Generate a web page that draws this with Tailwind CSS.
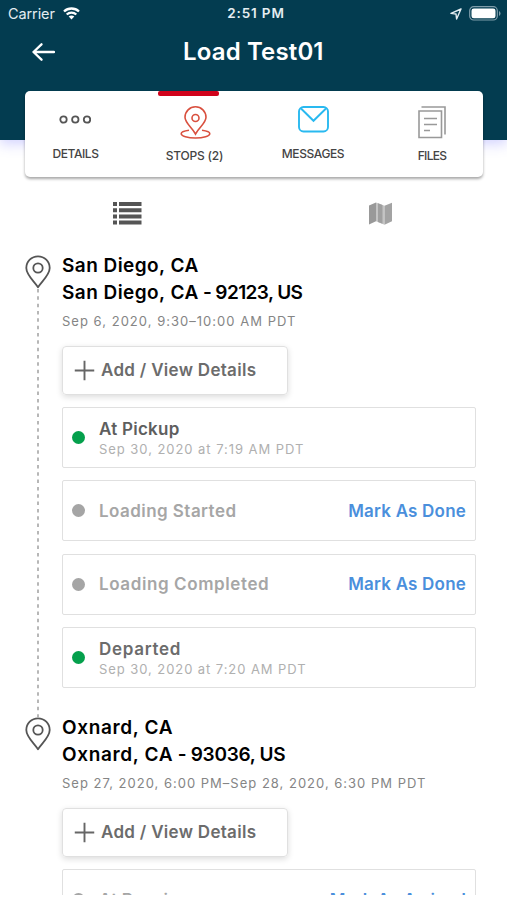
<!DOCTYPE html>
<html lang="en">
<head>
<meta charset="utf-8">
<title>Load Test01</title>
<script src="https://cdn.jsdelivr.net/npm/@tailwindcss/browser@4"></script>
</head>
<body class="bg-white">
<svg class="hidden">
  <symbol id="pin" viewBox="0 0 26 34"><path d="M13 32.2C9.5 26.5 1.3 20.2 1.3 13a11.7 11.7 0 0 1 23.4 0c0 7.2-8.2 13.500-11.700 19.200Z" fill="white" stroke="#555" stroke-width="1.8" stroke-linejoin="round"/><circle cx="13" cy="13" r="4.700" fill="none" stroke="#555" stroke-width="1.800"/></symbol>
  <symbol id="plus" viewBox="0 0 22 22"><path d="M11 .8v20.400M.8 11h20.400" stroke="#666" stroke-width="2"/></symbol>
</svg>
<main class="w-[507px] h-[900px] overflow-hidden flex flex-col bg-white font-['Inter',sans-serif]">
  <header class="h-[140px] shrink-0 bg-[#033c50] shadow-[0_4px_12px_rgba(80,80,255,0.25)]">
    <div class="h-[27px] grid grid-cols-3 items-center text-[14px] leading-[27px] text-[#e4edf1]">
      <div class="flex items-center pl-2 gap-[8px]"><span class="text-[14.500px] tracking-[-0.1px]">Carrier</span>
        <svg class="w-[17px] h-[13px]" viewBox="0 0 17 13" fill="none" stroke="white" stroke-width="2.300"><path d="M1 4.500C5.200.5 11.800.5 16 4.500M3.700 7.500c2.700-2.500 6.900-2.500 9.600 0"/><path d="M8.500 12.500 5.700 9.600c1.600-1.400 4-1.400 5.600 0Z" fill="white" stroke="none"/></svg>
      </div>
      <div class="text-center font-semibold text-[13.500px] tracking-[0.85px] pl-[5px]">2:51 PM</div>
      <div class="flex items-center justify-end gap-[7px] pr-[6px]">
        <svg class="w-3 h-3" viewBox="0 0 12 12" fill="none" stroke="#e4edf1" stroke-width="1.400" stroke-linejoin="round"><path d="M11 1 1 5.400l5 .6.600 5Z"/></svg>
        <svg class="w-[32px] h-[15px]" viewBox="0 0 32 15"><rect x=".7" y=".7" width="27.600" height="13.300" rx="4" fill="none" stroke="#7f9daa" stroke-width="1.200"/><rect x="2.500" y="2.500" width="24" height="9.700" rx="2.300" fill="white"/><path d="M30 5v5q1.500-.8 1.500-2.500T30 5Z" fill="#7f9daa"/></svg>
      </div>
    </div>
    <div class="h-[50px] flex items-center pl-8">
      <svg class="w-[23px] h-[18px]" viewBox="0 0 23 18" fill="none" stroke="white" stroke-width="2.300" stroke-linecap="round" stroke-linejoin="round"><path d="M22 9H1.500M9.500 1.300 1.500 9l8 7.700"/></svg>
      <h1 class="ml-[128px] text-[24px] leading-[50px] font-semibold tracking-[0.15px] text-white whitespace-nowrap">Load Test01</h1>
    </div>
  </header>
  <nav class="relative -mt-[49px] ml-[25px] w-[458px] h-[86px] shrink-0 rounded-[5px] bg-white shadow-[0_2px_3px_rgba(0,0,0,0.35)] flex text-[12px] leading-4 font-medium text-[#444]">
    <div class="w-[101px] flex flex-col items-center">
      <svg class="mt-[24px] -ml-[2px] w-[32px] h-[9px]" viewBox="0 0 32 9" fill="none" stroke="#555" stroke-width="1.800"><circle cx="4.500" cy="4.500" r="3.200"/><circle cx="16.300" cy="4.500" r="3.200"/><circle cx="28" cy="4.500" r="3.200"/></svg>
      <span class="mt-[22px] tracking-[-0.4px]">DETAILS</span>
    </div>
    <div class="w-[138px] flex flex-col items-center">
      <div class="w-[61px] h-[5px] -ml-[13px] rounded-[2px] bg-[#d0021b]"></div>
      <svg class="mt-[10px] w-[31px] h-[34px]" viewBox="0 0 31 34" fill="none" stroke="#d9503f" stroke-width="1.600"><path d="M15.500 28C12 21.500 5 17 5 11.300a10.500 10.500 0 0 1 21 0C26 17 19 21.500 15.500 28Z"/><circle cx="15.500" cy="12" r="3.500"/><path d="M9 24.300c-4.500.6-7.800 1.800-7.800 3.400 0 2.300 6.400 4.300 14.300 4.300s14.300-2 14.300-4.300c0-1.600-3.300-2.800-7.800-3.400"/></svg>
      <span class="mt-[8px] -ml-[1px] tracking-[-0.2px]">STOPS (2)</span>
    </div>
    <div class="w-[98px] flex flex-col items-center">
      <svg class="mt-[15px] w-[31px] h-[27px]" viewBox="0 0 31 27" fill="none" stroke="#29b9f0" stroke-width="1.900"><rect x="1" y="1" width="29" height="24.500" rx="4.500"/><path d="m3 2.500 12.500 12.300L28 2.500"/></svg>
      <span class="mt-[13px] tracking-[-0.4px]">MESSAGES</span>
    </div>
    <div class="w-[121px] pl-[19px] flex flex-col items-center">
      <svg class="mt-[15px] w-[28px] h-[33px]" viewBox="0 0 28 33" fill="none" stroke="#999" stroke-width="1.600"><path d="M1 5h22.500v26.500H1ZM3.500 1H27v27.500M6 12.500h13M6 18.500h13M6 24.500h6"/></svg>
      <span class="mt-[9px] tracking-[-0.7px]">FILES</span>
    </div>
  </nav>
  <div class="h-[78px] shrink-0 flex pt-[25px] pl-[113px]">
    <svg class="w-[29px] h-[23px]" viewBox="0 0 29 23" fill="#555"><path d="M0 0h4v4H0zM6 0h22.500v4H6zM0 6.200h4v4H0zM6 6.200h22.500v4H6zM0 12.400h4v4H0zM6 12.400h22.500v4H6zM0 18.600h4v4H0zM6 18.600h22.500v4H6z"/></svg>
    <svg class="ml-[227px] w-[23px] h-[23px]" viewBox="0 0 23 23"><path d="M0 3.500 7 .5v18.800L0 22.500Z" fill="#999"/><path d="m7 .5 8.500 3.300v19L7 19.300Z" fill="#c4c4c4"/><path d="m9 1.300 4.500 1.800v18.600L9 20Z" fill="#a0a0a0"/><path d="m15.500 3.800 7.500-3v18.500l-7.500 3.500Z" fill="#a3a3a3"/></svg>
  </div>

  <section class="h-[462px] shrink-0 flex">
    <div class="w-[62px] pl-[25px] shrink-0 flex flex-col">
      <svg class="w-[26px] h-[34px] shrink-0"><use href="#pin"/></svg>
      <svg class="w-[26px] h-[428px]"><path d="M13 0v428" stroke="#a6a6a6" stroke-width="1.600" stroke-dasharray="3.500 3.830"/></svg>
    </div>
    <div class="w-[414px]">
      <h2 class="-mt-[3px] text-[19px] leading-[27px] font-semibold text-black whitespace-nowrap tracking-[0.45px]">San Diego, CA<br>San Diego, CA<span class="tracking-[-0.6px]"> - 92123, US</span></h2>
      <p class="mt-[6px] text-[13px] leading-[18px] tracking-[1.020px] text-[#858585] whitespace-nowrap">Sep 6, 2020, 9:30–10:00 AM PDT</p>
      <div class="mt-[16px] w-[226px] h-[49px] flex items-center pl-[11px] gap-[6px] rounded-[4px] border border-[#e0e0e0] shadow-[0_2px_6px_rgba(0,0,0,0.14)] text-[17px] font-semibold text-[#6c6c6c] tracking-[0.3px] whitespace-nowrap"><svg class="w-[21px] h-[21px]"><use href="#plus"/></svg>Add / View Details</div>
      <div class="mt-[12px] h-[61px] border border-[#e0e0e0] rounded-[2px] flex items-center pl-[9px] pr-[9px]">
        <i class="size-[13px] rounded-full bg-[#04a04c]"></i>
        <div class="ml-[14px]"><div class="text-[17px] leading-[22px] font-semibold text-[#5e5e5e] tracking-[0.25px]">At Pickup</div><div class="text-[13px] leading-[18px] tracking-[0.95px] text-[#b0b0b0]">Sep 30, 2020 at 7:19 AM PDT</div></div>
      </div>
      <div class="mt-[12px] h-[61px] border border-[#e0e0e0] rounded-[2px] flex items-center pl-[9px] pr-[9px] text-[17px] font-semibold">
        <i class="size-[13px] rounded-full bg-[#a5a5a5]"></i><span class="ml-[14px] pt-[2px] text-[#a6a6a6] tracking-[0.45px]">Loading Started</span><span class="ml-auto pt-[2px] text-[#4a8fdc] tracking-[0.2px]">Mark As Done</span>
      </div>
      <div class="mt-[13px] h-[61px] border border-[#e0e0e0] rounded-[2px] flex items-center pl-[9px] pr-[9px] text-[17px] font-semibold">
        <i class="size-[13px] rounded-full bg-[#a5a5a5]"></i><span class="ml-[14px] text-[#a6a6a6] tracking-[0.6px]">Loading Completed</span><span class="ml-auto text-[#4a8fdc] tracking-[0.2px]">Mark As Done</span>
      </div>
      <div class="mt-[12px] h-[61px] border border-[#e0e0e0] rounded-[2px] flex items-center pl-[9px] pr-[9px]">
        <i class="size-[13px] rounded-full bg-[#04a04c]"></i>
        <div class="ml-[14px]"><div class="text-[17px] leading-[22px] font-semibold text-[#6c6c6c] tracking-[0.7px]">Departed</div><div class="text-[13px] leading-[18px] tracking-[0.93px] text-[#b0b0b0]">Sep 30, 2020 at 7:20 AM PDT</div></div>
      </div>
    </div>
  </section>

  <section class="h-[182px] shrink-0 flex overflow-hidden pt-[4px] -mt-[4px]">
    <div class="w-[62px] pl-[25px] shrink-0"><svg class="w-[26px] h-[34px]"><use href="#pin"/></svg></div>
    <div class="w-[414px]">
      <h2 class="-mt-[3px] text-[19px] leading-[27px] font-semibold text-black whitespace-nowrap tracking-[0.65px]">Oxnard, CA<br>Oxnard, CA<span class="tracking-[-0.3px]"> - 93036, US</span></h2>
      <p class="mt-[6px] text-[13px] leading-[18px] tracking-[1px] text-[#858585] whitespace-nowrap">Sep 27, 2020, 6:00 PM–Sep 28, 2020, 6:30 PM PDT</p>
      <div class="mt-[16px] w-[226px] h-[49px] flex items-center pl-[11px] gap-[6px] rounded-[4px] border border-[#e0e0e0] shadow-[0_2px_6px_rgba(0,0,0,0.14)] text-[17px] font-semibold text-[#6c6c6c] tracking-[0.3px] whitespace-nowrap"><svg class="w-[21px] h-[21px]"><use href="#plus"/></svg>Add / View Details</div>
      <div class="mt-[12px] h-[61px] border border-[#e0e0e0] rounded-[2px] flex items-center pl-[9px] pr-[9px] text-[17px] font-semibold">
        <i class="size-[13px] rounded-full bg-[#a5a5a5]"></i><span class="ml-[14px] pt-[3px] text-[#a6a6a6] tracking-[0.2px]">At Receiver</span><span class="ml-auto pt-[3px] text-[#4a8fdc] tracking-[0.2px]">Mark As Arrived</span>
      </div>
    </div>
  </section>
</main>
</body>
</html>
